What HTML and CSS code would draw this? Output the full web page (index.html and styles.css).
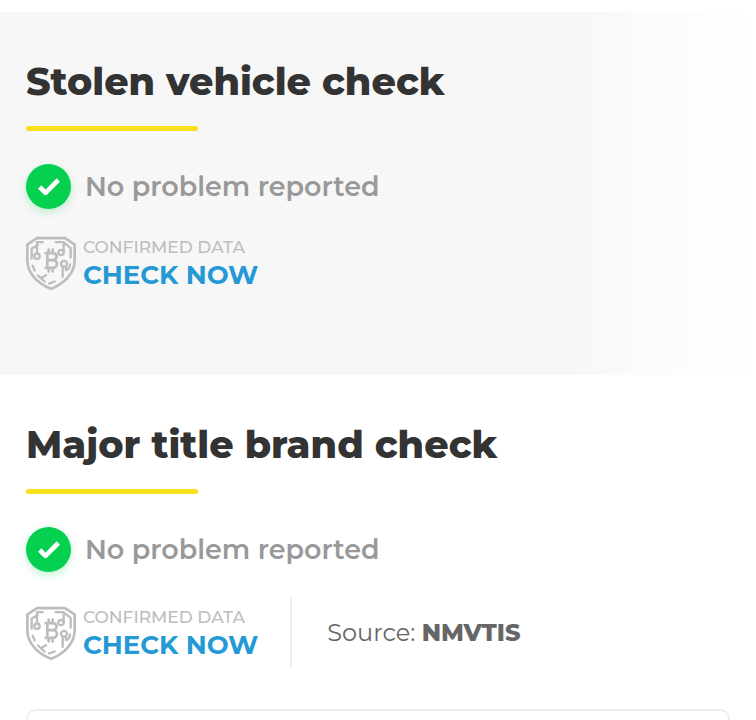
FILE: index.html
```html
<!DOCTYPE html>
<html lang="en">
<head>
<meta charset="utf-8">
<meta name="viewport" content="width=device-width, initial-scale=1">
<title>Vehicle checks</title>
<link rel="stylesheet" href="styles.css">
</head>
<body>
<svg class="sprite" aria-hidden="true">
  <symbol id="shield" viewBox="0 0 150 162">
    <g fill="none" stroke="currentColor" stroke-linejoin="round" stroke-linecap="round">
      <path stroke-width="8" d="M33 5H117L146 24V72C146 112 112 142 75 157C38 142 4 112 4 72V24Z"/>
      <g stroke-width="7">
        <path d="M17 66V36L35 26M33 17H50M33 20V50M89 17H112L134 34V63"/>
        <circle cx="33" cy="59" r="8"/>
        <circle cx="105" cy="48" r="8"/>
        <path d="M113 47V24"/>
        <path stroke-width="8" d="M59 50H78C96 50 96 71 79 71C98 71 98 94 78 94H59M64 50V94M66 71H79M68 39V48M80 39V48M68 96V105M80 96V105"/>
        <circle cx="114" cy="82" r="9"/>
        <path d="M110 92V121M120 91V101Q131 99 132 84M20 88L26 102M36 117L56 135M44 125L60 116M69 141L86 135"/>
      </g>
    </g>
  </symbol>
  <symbol id="tick" viewBox="0 0 24 24">
    <path d="M4 12L9 17L20 6" fill="none" stroke="currentColor" stroke-width="4" stroke-linejoin="round"/>
  </symbol>
</svg>
<main>
  <section class="check check-shaded">
    <h2 class="title">Stolen vehicle check</h2>
    <div class="status">
      <span class="status-icon"><svg aria-hidden="true"><use href="#tick"/></svg></span>
      <p class="status-text">No problem reported</p>
    </div>
    <div class="details">
      <div class="confirmed">
        <svg class="shield" aria-hidden="true"><use href="#shield"/></svg>
        <div>
          <p class="label">CONFIRMED DATA</p>
          <a class="link" href="#">CHECK NOW</a>
        </div>
      </div>
    </div>
  </section>
  <section class="check">
    <h2 class="title">Major title brand check</h2>
    <div class="status">
      <span class="status-icon"><svg aria-hidden="true"><use href="#tick"/></svg></span>
      <p class="status-text">No problem reported</p>
    </div>
    <div class="details">
      <div class="confirmed">
        <svg class="shield" aria-hidden="true"><use href="#shield"/></svg>
        <div>
          <p class="label">CONFIRMED DATA</p>
          <a class="link" href="#">CHECK NOW</a>
        </div>
      </div>
      <p class="source">Source: <strong>NMVTIS</strong></p>
    </div>
    <div class="card"></div>
  </section>
</main>
</body>
</html>
```
FILE: styles.css
```css
* {
  box-sizing: border-box;
}

body {
  margin: 0;
  padding-top: 12px;
  background: #fff;
  color: #333;
  font-family: Montserrat, Inter, sans-serif;
}

p,
h2 {
  margin: 0;
}

.sprite {
  display: none;
}

.check {
  padding: 46px 26px 0;
}

.check-shaded {
  padding-bottom: 84px;
  background: linear-gradient(90deg, #f7f7f7 76%, #fcfcfc 88%, #fff);
}

.title {
  font-size: 38px;
  font-weight: 800;
  line-height: 48px;
}

.title::after {
  content: "";
  display: block;
  width: 172px;
  height: 5px;
  margin-top: 20px;
  border-radius: 2px;
  background: #f8e01b;
}

.status {
  display: flex;
  align-items: center;
  gap: 14px;
  margin-top: 33px;
}

.status-icon {
  display: grid;
  place-items: center;
  width: 45px;
  height: 45px;
  border-radius: 50%;
  background: #05d04f;
  color: #fff;
  box-shadow: 0 3px 8px #05d04f40;
}

.status-icon svg {
  width: 28px;
  height: 28px;
}

.status-text {
  color: #999;
  font-size: 27px;
  font-weight: 600;
  line-height: 36px;
}

.details {
  display: flex;
  align-items: center;
  margin-top: 26px;
}

.confirmed {
  display: flex;
  align-items: center;
  gap: 7px;
}

.shield {
  width: 50px;
  height: 55px;
  color: #bdbdbd;
}

.label {
  color: #bdbdbd;
  font-size: 17px;
  font-weight: 500;
  line-height: 24px;
}

.link {
  display: block;
  color: #2499d6;
  font-size: 26px;
  font-weight: 700;
  line-height: 32px;
  text-decoration: none;
}

.source {
  margin-left: 32px;
  padding: 17px 0 17px 35px;
  border-left: 2px solid #eee;
  color: #666;
  font-size: 24px;
  font-weight: 400;
  line-height: 36px;
}

.source strong {
  font-weight: 800;
}

.card {
  height: 11px;
  margin-top: 41px;
  border: 2px solid #eee;
  border-bottom: 0;
  border-radius: 10px 10px 0 0;
}
```
